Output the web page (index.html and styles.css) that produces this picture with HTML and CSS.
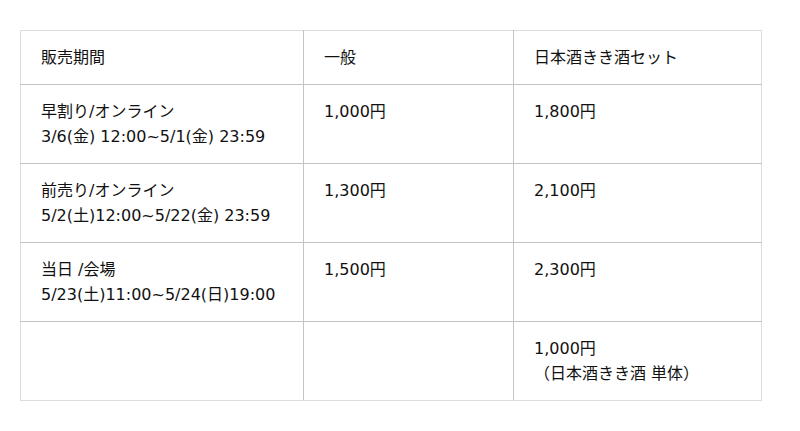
FILE: index.html
```html
<!DOCTYPE html>
<html lang="ja">
<head>
<meta charset="utf-8">
<link rel="stylesheet" href="styles.css">
</head>
<body>
<div class="wrap">
<table class="price">
  <colgroup>
    <col class="c1"><col class="c2"><col class="c3">
  </colgroup>
  <tr>
    <td>販売期間</td>
    <td>一般</td>
    <td>日本酒きき酒セット</td>
  </tr>
  <tr>
    <td>早割り/オンライン<br>3/6(金) 12:00~5/1(金) 23:59</td>
    <td>1,000円</td>
    <td>1,800円</td>
  </tr>
  <tr>
    <td>前売り/オンライン<br>5/2(土)12:00~5/22(金) 23:59</td>
    <td>1,300円</td>
    <td>2,100円</td>
  </tr>
  <tr>
    <td>当日 /会場<br>5/23(土)11:00~5/24(日)19:00</td>
    <td>1,500円</td>
    <td>2,300円</td>
  </tr>
  <tr>
    <td></td>
    <td></td>
    <td>1,000円<br>（日本酒きき酒 単体）</td>
  </tr>
</table>
</div>
</body>
</html>
```

FILE: styles.css
```css
html, body {
  margin: 0;
  padding: 0;
  background: #fff;
}
.wrap {
  padding: 30px 0 0 20px;
}
.price {
  border-collapse: collapse;
  width: 741px;
  table-layout: fixed;
  font-family: "DejaVu Sans", "Noto Sans CJK JP", sans-serif;
  font-size: 16px;
  line-height: 25px;
  color: #111;
  border: 1px solid #ddd;
}
.c1 { width: 283px; }
.c2 { width: 210px; }
.c3 { width: 248px; }
.price td {
  border: 1px solid #c4c4c4;
  padding: 14px 20px 14px 20px;
  vertical-align: top;
  white-space: nowrap;
}
.price tr:first-child td { border-top-color: #ddd; }
.price tr:last-child td { border-bottom-color: #ddd; }
.price td:first-child { border-left-color: #ddd; }
.price td:last-child { border-right-color: #ddd; }
```
